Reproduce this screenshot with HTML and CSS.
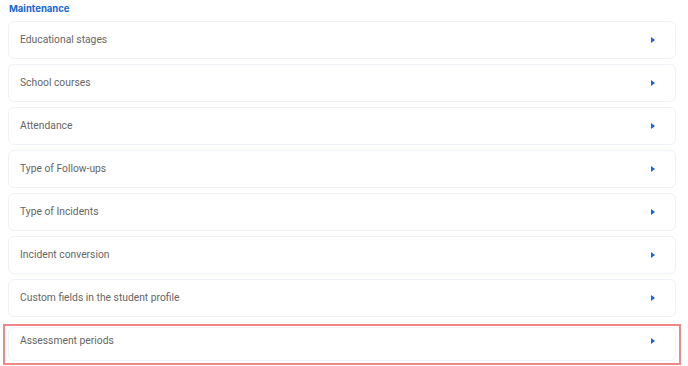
FILE: index.html
```html
<!DOCTYPE html>
<html lang="en">
<head>
  <meta charset="UTF-8">
  <title>Maintenance</title>
  <meta name="viewport" content="width=device-width, initial-scale=1.0">
  <link rel="stylesheet" href="styles.css">
</head>
<body>

  <div class="section">
    <h2 class="section-title">Maintenance</h2>

    <div class="menu">
      <a class="menu-item" href="#">Educational stages <span class="caret"></span></a>
      <a class="menu-item" href="#">School courses <span class="caret"></span></a>
      <a class="menu-item" href="#">Attendance <span class="caret"></span></a>
      <a class="menu-item" href="#">Type of Follow-ups <span class="caret"></span></a>
      <a class="menu-item" href="#">Type of Incidents <span class="caret"></span></a>
      <a class="menu-item" href="#">Incident conversion <span class="caret"></span></a>
      <a class="menu-item" href="#">Custom fields in the student profile <span class="caret"></span></a>

      <!-- highlighted item -->
      <div class="highlight">
        <a class="menu-item" href="#">Assessment periods <span class="caret"></span></a>
      </div>
    </div>
  </div>

</body>
</html>
```

FILE: styles.css
```css
body {
  margin: 0;
  font-family: 'Inter', 'Liberation Sans', sans-serif;
  background: #fff;
  color: #555;
}

.section {
  padding: 2px 12px 0 8px;
}

.section-title {
  font-size: 9.5px;
  line-height: 14px;
  font-weight: 700;
  color: #1565d8;
  margin: 0 0 5px 1px;
}

.menu {
  display: flex;
  flex-direction: column;
  gap: 5px;
}

.menu-item {
  display: flex;
  align-items: center;
  justify-content: space-between;
  padding: 11px 20px 11px 11px;
  font-family: 'Roboto', 'Liberation Sans', sans-serif;
  font-size: 10.3px;
  line-height: 14px;
  color: #666;
  text-decoration: none;
  background: #fff;
  border: 1px solid #eff2f6;
  border-radius: 6px;
}

.caret {
  width: 0;
  height: 0;
  border-top: 3.5px solid transparent;
  border-bottom: 3.5px solid transparent;
  border-left: 4.5px solid #1565d8;
}

.highlight {
  margin: 2px -5px 0 -5px;
  padding: 1px 3px 2px 3px;
  border: 2px solid #f08686;
}

.highlight .menu-item {
  padding-top: 6px;
  padding-bottom: 12px;
}
```
